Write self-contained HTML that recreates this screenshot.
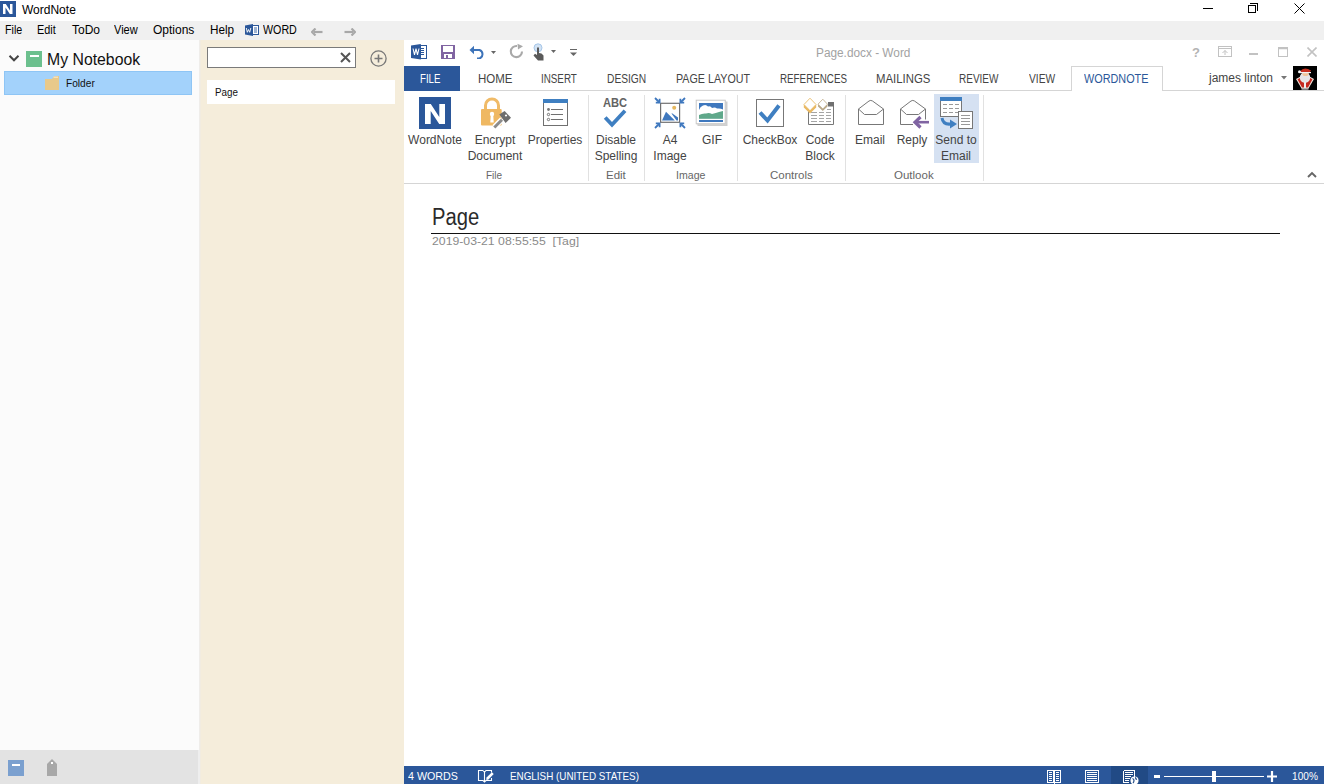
<!DOCTYPE html>
<html><head><meta charset="utf-8">
<style>
*{margin:0;padding:0;box-sizing:border-box}
html,body{width:1324px;height:784px;overflow:hidden;background:#fff;font-family:"Liberation Sans",sans-serif;}
.a{position:absolute;white-space:nowrap}
#title{left:0;top:0;width:1324px;height:21px;background:#fff}
#menu{left:0;top:21px;width:1324px;height:19px;background:#f0f0f0}
.m{font-size:12px;color:#000;top:23px}
#left{left:0;top:40px;width:200px;height:744px;background:#fbfbfb;border-right:1px solid #efedea}
#leftbar{left:0;top:750px;width:200px;height:34px;background:#e3e3e3;border-right:2px solid #eeeeee}
#mid{left:200px;top:40px;width:204px;height:744px;background:#f5eddb;border-left:1px solid #f2ece0}
#word{left:404px;top:40px;width:920px;height:744px;background:#fff}
.tab{font-size:12px;color:#444;top:72px}
.lbl{font-size:12px;color:#444;text-align:center}
.glbl{font-size:11.5px;color:#666;top:169px}
.sep{width:1px;top:95px;height:86px;background:#e1e1e1}
#status{left:404px;top:766px;width:920px;height:18px;background:#2b579a}
.st{font-size:11px;color:#fff;top:770px}
</style></head><body>
<!-- title bar -->
<div class="a" id="title"></div>
<svg class="a" style="left:0;top:1px" width="16" height="16"><rect width="16" height="16" fill="#2b579a"/><path d="M3 3H5.8L10 9.5V3H12.5V13H9.8L5.5 6.5V13H3Z" fill="#fff"/></svg>
<div class="a" style="left:22px;top:3px;font-size:12px;color:#000">WordNote</div>
<!-- window controls -->
<div class="a" style="left:1203px;top:8px;width:10px;height:1px;background:#000"></div>
<div class="a" style="left:1248px;top:5px;width:8px;height:8px;border:1px solid #000"></div>
<div class="a" style="left:1250px;top:3px;width:8px;height:8px;border-top:1px solid #000;border-right:1px solid #000"></div>
<svg class="a" style="left:1294px;top:3px" width="11" height="11"><path d="M0.5 0.5L10.5 10.5M10.5 0.5L0.5 10.5" stroke="#000" stroke-width="1"/></svg>

<!-- menu -->
<div class="a" id="menu"></div>
<div class="a m" id="t_File" style="left:5.21px;transform:scaleX(0.8909);transform-origin:0 0">File</div>
<div class="a m" id="t_Edit" style="left:37.20px;transform:scaleX(0.9048);transform-origin:0 0">Edit</div>
<div class="a m" style="left:72px">ToDo</div>
<div class="a m" id="t_View" style="left:114.00px;transform:scaleX(0.9190);transform-origin:0 0">View</div>
<div class="a m" style="left:153px">Options</div>
<div class="a m" id="t_Help" style="left:210.11px;transform:scaleX(0.9769);transform-origin:0 0">Help</div>
<svg class="a" style="left:245px;top:24px" width="14" height="12"><path d="M0 1.5L8 0V12L0 10.5Z" fill="#2b579a"/><rect x="7.5" y="1.5" width="6" height="9" fill="#fff" stroke="#2b579a" stroke-width="1"/><path d="M9 4H12M9 6H12M9 8H12" stroke="#2b579a" stroke-width="0.9"/><path d="M1.3 4L2.3 8.3L3.5 5.5L4.7 8.3L5.8 4" stroke="#fff" stroke-width="0.9" fill="none"/></svg>
<div class="a m" id="t_WORD" style="left:263.08px;transform:scaleX(0.8903);transform-origin:0 0">WORD</div>
<svg class="a" style="left:311px;top:28px" width="12" height="8"><path d="M11.5 4H3" stroke="#a8a8a8" stroke-width="2.2"/><path d="M4.5 0.5L1 4L4.5 7.5" stroke="#a8a8a8" stroke-width="2.2" fill="none"/></svg>
<svg class="a" style="left:344px;top:28px" width="12" height="8"><path d="M0.5 4H9" stroke="#a8a8a8" stroke-width="2.2"/><path d="M7.5 0.5L11 4L7.5 7.5" stroke="#a8a8a8" stroke-width="2.2" fill="none"/></svg>

<!-- left panel -->
<div class="a" id="left"></div>
<svg class="a" style="left:8px;top:54px" width="12" height="9"><path d="M1.5 1.8L6 6.3L10.5 1.8" stroke="#444" stroke-width="2" fill="none"/></svg>
<div class="a" style="left:26px;top:51px;width:16px;height:16px;background:#6cc08e"></div>
<div class="a" style="left:30px;top:55px;width:9px;height:2px;background:#fff"></div>
<div class="a" id="t_MyNotebook" style="left:47.07px;top:50px;font-size:17px;color:#111;transform:scaleX(0.9300);transform-origin:0 0">My Notebook</div>
<div class="a" style="left:4px;top:71px;width:188px;height:24px;background:#a3d2fb;border:1px solid #8ec5f5"></div>
<svg class="a" style="left:45px;top:76px" width="14" height="14"><path d="M0 3H7L8 1.5Q9 0 11 0H14V14H0Z" fill="#e8c98a"/><path d="M8.5 1.2H13" stroke="#f7ecd4" stroke-width="1"/></svg>
<div class="a" id="t_Folder" style="left:66.11px;top:77px;font-size:11px;color:#111;transform:scaleX(0.9231);transform-origin:0 0">Folder</div>
<div class="a" id="leftbar"></div>
<div class="a" style="left:8px;top:760px;width:16px;height:16px;background:#7ba0cf"></div>
<div class="a" style="left:12px;top:764px;width:8px;height:2px;background:#fff"></div>
<svg class="a" style="left:46px;top:758px" width="12" height="18"><path d="M1 18V6L6 1L11 6V18Z" fill="#a8a8a8"/><rect x="5" y="4" width="2" height="2" fill="#fff"/></svg>

<!-- mid panel -->
<div class="a" id="mid"></div>
<div class="a" style="left:207px;top:47px;width:149px;height:21px;background:#fff;border:1px solid #7a7a7a"></div>
<svg class="a" style="left:340px;top:52px" width="11" height="11"><path d="M1 1L10 10M10 1L1 10" stroke="#555" stroke-width="2"/></svg>
<svg class="a" style="left:370px;top:50px" width="18" height="17"><circle cx="8.5" cy="8.5" r="7.6" stroke="#777" stroke-width="1.3" fill="none"/><path d="M8.5 4.5V12.5M4.5 8.5H12.5" stroke="#777" stroke-width="1.6"/></svg>
<div class="a" style="left:207px;top:80px;width:188px;height:24px;background:#fff"></div>
<div class="a" id="t_PageMid" style="left:214.79px;top:86px;font-size:11px;color:#111;transform:scaleX(0.8928);transform-origin:0 0">Page</div>

<!-- word -->
<div class="a" id="word"></div>
<!-- QAT -->
<svg class="a" style="left:410px;top:43px" width="18" height="17"><rect x="10.5" y="2.5" width="6" height="13" fill="#fff" stroke="#2b579a" stroke-width="1"/><path d="M10 5.5H14M10 7.5H14M10 9.5H14M10 11.5H14" stroke="#2b579a" stroke-width="1"/><path d="M1 2.5L10.8 1V16.5L1 15Z" fill="#2b579a"/><path d="M2.5 5.5L4 12H5L6 8L7 12H8L9.5 5.5H8.5L7.5 9.5L6.5 5.5H5.5L4.5 9.5L3.5 5.5Z" fill="#fff"/></svg>
<svg class="a" style="left:441px;top:45px" width="14" height="14" shape-rendering="crispEdges"><rect x="0" y="0" width="14" height="14" fill="#8064a2"/><rect x="2" y="1" width="10" height="6" fill="#fff"/><rect x="3" y="9" width="8" height="4" fill="#fff"/><rect x="5" y="10" width="2" height="3" fill="#8064a2"/></svg>
<svg class="a" style="left:469px;top:45px" width="30" height="14"><path d="M3 5H10.5A4.5 4.5 0 0 1 10.5 13.5H8" stroke="#3d73b9" stroke-width="2" fill="none"/><path d="M0.5 5L5 0.8V9.2Z" fill="#3d73b9"/><path d="M22 6H27L24.5 9Z" fill="#666"/></svg>
<svg class="a" style="left:508px;top:43px" width="17" height="17"><path d="M14 8.5A5.6 5.6 0 1 1 9 3" stroke="#a9a9a9" stroke-width="2.1" fill="none"/><path d="M9.5 0.8L15 3.2L10 6.5Z" fill="#a9a9a9"/></svg>
<svg class="a" style="left:531px;top:43px" width="28" height="18"><circle cx="7" cy="4.8" r="4" fill="#d3e3f4" stroke="#a6c6e8" stroke-width="1"/><path d="M6 4.5V12L4 10.8L2.5 12.5L7 17.5H12.5V12.5L10.5 10.5L8 10V4.5Z" fill="#5a5a5a"/><path d="M20 7H25L22.5 10Z" fill="#666"/></svg>
<svg class="a" style="left:569px;top:48px" width="9" height="9"><path d="M1 1.5H8" stroke="#666" stroke-width="1"/><path d="M1 4.5H8L4.5 8Z" fill="#666"/></svg>
<div class="a" style="left:816px;top:46px;font-size:12px;color:#a2a2a2;transform:scaleX(0.985);transform-origin:0 0">Page.docx - Word</div>
<div class="a" style="left:1192px;top:45px;font-size:13px;font-weight:bold;color:#b3b3b3">?</div>
<svg class="a" style="left:1218px;top:46px" width="14" height="11"><rect x="0.5" y="0.5" width="13" height="10" fill="none" stroke="#c2c2c2"/><path d="M0.5 2.5H13.5" stroke="#c2c2c2"/><path d="M7 9V4.5M4.5 7L7 4.5L9.5 7" stroke="#c2c2c2" fill="none"/></svg>
<div class="a" style="left:1249px;top:53px;width:9px;height:2px;background:#c2c2c2"></div>
<svg class="a" style="left:1278px;top:47px" width="10" height="10"><rect x="0.5" y="0.5" width="9" height="9" fill="none" stroke="#c2c2c2"/><path d="M0.5 1.5H9.5" stroke="#c2c2c2" stroke-width="1.5"/></svg>
<svg class="a" style="left:1307px;top:47px" width="10" height="10"><path d="M0.5 0.5L9.5 9.5M9.5 0.5L0.5 9.5" stroke="#c2c2c2" stroke-width="1.6"/></svg>
<!-- tabs -->
<div class="a" style="left:404px;top:90px;width:920px;height:1px;background:#d5d5d5"></div>
<div class="a" style="left:404px;top:66px;width:56px;height:25px;background:#2b579a"></div>
<div class="a tab" id="t_FILE" style="left:420.19px;color:#fff;transform:scaleX(0.8086);transform-origin:0 0">FILE</div>
<div class="a tab" id="t_HOME" style="left:477.51px;transform:scaleX(0.9585);transform-origin:0 0">HOME</div>
<div class="a tab" id="t_INSERT" style="left:541.00px;transform:scaleX(0.8182);transform-origin:0 0">INSERT</div>
<div class="a tab" id="t_DESIGN" style="left:606.91px;transform:scaleX(0.8523);transform-origin:0 0">DESIGN</div>
<div class="a tab" id="t_PAGELAYOUT" style="left:676.00px;transform:scaleX(0.8928);transform-origin:0 0">PAGE LAYOUT</div>
<div class="a tab" id="t_REFERENCES" style="left:780.00px;transform:scaleX(0.8171);transform-origin:0 0">REFERENCES</div>
<div class="a tab" id="t_MAILINGS" style="left:876.00px;transform:scaleX(0.9474);transform-origin:0 0">MAILINGS</div>
<div class="a tab" id="t_REVIEW" style="left:959.00px;transform:scaleX(0.8333);transform-origin:0 0">REVIEW</div>
<div class="a tab" id="t_VIEW" style="left:1028.60px;transform:scaleX(0.8517);transform-origin:0 0">VIEW</div>
<div class="a" style="left:1071px;top:66px;width:92px;height:25px;background:#fff;border:1px solid #d5d5d5;border-bottom:none"></div>
<div class="a tab" id="t_WORDNOTE" style="left:1084.00px;color:#2b579a;transform:scaleX(0.9029);transform-origin:0 0">WORDNOTE</div>
<div class="a" style="left:1209px;top:71px;font-size:12px;color:#444">james linton</div>
<svg class="a" style="left:1281px;top:76px" width="6" height="4"><path d="M0 0H6L3 3.5Z" fill="#777"/></svg>
<div class="a" style="left:1293px;top:66px;width:24px;height:24px;background:#000"></div>
<svg class="a" style="left:1293px;top:66px" width="24" height="24"><path d="M3 13L8.5 10H15.5L21 13L15.5 22.5H8.5Z" fill="#f2e8e0"/><path d="M4.5 13.3L9 11H15L19.5 13.3L15 21.5H9Z" fill="#c42a1f"/><path d="M11 15H13V22H11Z" fill="#eee"/><ellipse cx="12" cy="11.5" rx="5.2" ry="5.3" fill="#e6e6e6"/><ellipse cx="12.5" cy="7.5" rx="3.2" ry="2.6" fill="#f0c59a"/><path d="M7 5.5Q11 0 18 4.5L17 6H8Z" fill="#c8301f"/><path d="M7 6H18V7.2H7Z" fill="#f3f3f3"/><circle cx="6.5" cy="5.8" r="1.5" fill="#f3f3f3"/><path d="M8.5 22.5H15.5V23.5H8.5Z" fill="#eee"/></svg>
<!-- ribbon body -->
<div class="a" style="left:404px;top:183px;width:920px;height:1px;background:#d5d5d5"></div>
<div class="a sep" style="left:588px"></div>
<div class="a sep" style="left:644px"></div>
<div class="a sep" style="left:737px"></div>
<div class="a sep" style="left:845px"></div>
<div class="a sep" style="left:983px"></div>
<svg class="a" style="left:1307px;top:171px" width="10" height="8"><path d="M1 6L5 2L9 6" stroke="#666" stroke-width="1.9" fill="none"/></svg>
<!-- File group -->
<div class="a" style="left:419px;top:97px;width:32px;height:32px;background:#2b579a"></div>
<svg class="a" style="left:419px;top:97px" width="32" height="32"><path d="M6 7H11.8L20.3 20V7H26V27H20.2L11.7 14V27H6Z" fill="#fff"/></svg>
<div class="a lbl" style="left:405px;top:133px;width:60px">WordNote</div>
<svg class="a" style="left:476px;top:94px" width="40" height="38"><path d="M9.5 15.5V11.5A6.5 6.5 0 0 1 22.5 11.5V15.5" stroke="#f0bb68" stroke-width="3" fill="none"/><rect x="5" y="15" width="20.7" height="16.5" rx="1" fill="#efb862"/><circle cx="16" cy="20" r="2.2" fill="#fff"/><path d="M14.8 20L14.3 28.5H17.7L17.2 20Z" fill="#fff"/><path d="M26.5 23L31 18.5L35.5 23L31 27.5Z" fill="#fff" stroke="#fff" stroke-width="3"/><path d="M18.5 33L26 25.5" stroke="#fff" stroke-width="5.5"/><path d="M18.3 33.5L26 25.8" stroke="#8c8c8c" stroke-width="3"/><path d="M23.3 20.4L28.6 17L35 23.8L29.6 29Z" fill="#6e6e6e"/><circle cx="30" cy="21.5" r="1.1" fill="#fff"/></svg>
<div class="a lbl" style="left:465px;top:133px;width:60px">Encrypt</div>
<div class="a lbl" style="left:465px;top:149px;width:60px">Document</div>
<svg class="a" style="left:543px;top:99px" width="26" height="27"><rect x="0.5" y="0.5" width="24" height="26" fill="#fff" stroke="#707070"/><rect x="0" y="0" width="25" height="4" fill="#3f7fc1"/><circle cx="5.5" cy="10.5" r="1.4" fill="#777"/><circle cx="5.5" cy="15.5" r="1.2" fill="none" stroke="#666" stroke-width="0.9"/><circle cx="5.5" cy="20.5" r="1.2" fill="none" stroke="#666" stroke-width="0.9"/><path d="M8 10.5H20M8 15.5H20M8 20.5H20" stroke="#707070" stroke-width="1"/></svg>
<div class="a lbl" style="left:525px;top:133px;width:60px">Properties</div>
<div class="a glbl" style="left:485.5px;transform:scaleX(0.87);transform-origin:0 0">File</div>
<!-- Edit -->
<div class="a" style="left:603px;top:96px;font-size:12px;font-weight:bold;color:#636363;transform:scaleX(0.93);transform-origin:0 0">ABC</div>
<svg class="a" style="left:602px;top:108px" width="26" height="21"><path d="M3.2 9.5L10 16.8L23 2.8" stroke="#3f7fc1" stroke-width="3.8" fill="none" stroke-linejoin="miter"/></svg>
<div class="a lbl" style="left:586px;top:133px;width:60px">Disable</div>
<div class="a lbl" style="left:586px;top:149px;width:60px">Spelling</div>
<div class="a glbl" style="left:606px">Edit</div>
<!-- Image -->
<svg class="a" style="left:650px;top:94px" width="40" height="38"><rect x="10.6" y="9.3" width="19" height="19" fill="#fff" stroke="#707070" stroke-width="1.2"/><path d="M12 26.6L16 17.8L24.8 26.6Z" fill="#3f78be"/><path d="M21.5 19.6L22 19.3L28 23.6V26.6L26.5 26.6Z" fill="#3f78be"/><circle cx="24.2" cy="13.8" r="2" fill="#e5b75e"/><g stroke="#3f78be" stroke-width="1.8" fill="none"><path d="M5 4L9.5 8.5M35 4L30.5 8.5M5 34L9.5 29.5M35 34L30.5 29.5"/><path d="M5.8 8.6H9.6V4.8M34.2 8.6H30.4V4.8M5.8 29.4H9.6V33.2M34.2 29.4H30.4V33.2"/></g></svg>
<div class="a lbl" style="left:640px;top:133px;width:60px">A4</div>
<div class="a lbl" style="left:640px;top:149px;width:60px">Image</div>
<svg class="a" style="left:695px;top:99px" width="34" height="28"><rect x="2.5" y="2.5" width="30" height="24.5" fill="#cfcfcf"/><rect x="1.5" y="1.5" width="29.5" height="24" fill="#d9d9d9"/><rect x="1.2" y="1.2" width="29" height="23.5" fill="#fff" stroke="#c9c9c9" stroke-width="1"/><rect x="4" y="4" width="24" height="15.8" fill="#3f78be"/><path d="M4 11Q5 7.5 8 6.5Q11 5 13 7.5Q15.5 6.5 17 9Q20 8 22 9.5Q25.5 9 28 10.5V19.8H4Z" fill="#fff"/><path d="M4 16Q7.5 14 11 14.5Q14 13.5 17 15Q21 14 24 13Q26 12.5 28 12V19.8H4Z" fill="#5fa88a"/><rect x="4" y="21" width="24" height="2" fill="#3f78be"/></svg>
<div class="a lbl" style="left:682px;top:133px;width:60px">GIF</div>
<div class="a glbl" style="left:675.5px;transform:scaleX(0.92);transform-origin:0 0">Image</div>
<!-- Controls -->
<svg class="a" style="left:756px;top:99px" width="29" height="28"><rect x="0.5" y="0.5" width="27" height="27" fill="#fff" stroke="#777"/><path d="M4 13.5L11.5 21.5L23 6.5" stroke="#3f7fc1" stroke-width="4" fill="none"/></svg>
<div class="a lbl" style="left:740px;top:133px;width:60px">CheckBox</div>
<svg class="a" style="left:802px;top:97px" width="34" height="30"><path d="M6.5 10V27.5H31.5V5.5H27" fill="#fff" stroke="#777"/><path d="M25 12.5H29M9 15.5H15M17 15.5H22M24 15.5H29M9 18.5H15M17 18.5H22M24 18.5H29M9 21.5H15M17 21.5H22M24 21.5H29M9 24.5H15M17 24.5H22M24 24.5H29" stroke="#a5a5a5" stroke-width="1"/><rect x="26" y="5" width="6" height="4.5" fill="#707070"/><path d="M8 1.2L14 7.5L8 13.8L2 7.5Z" fill="#fff" stroke="#ecc47a" stroke-width="1"/><path d="M1.8 7.5L8 13.5L14.2 7.5V10.5L8 16.5L1.8 10.5Z" fill="#e9b963"/><path d="M20.8 2.2L25.5 7.2L20.8 12L16 7.2Z" fill="#fff" stroke="#cbbb9d" stroke-width="1"/><path d="M16 7.2L20.8 12L25.5 7.2V9.5L20.8 14L16 9.5Z" fill="#b9a888"/></svg>
<div class="a lbl" style="left:790px;top:133px;width:60px">Code</div>
<div class="a lbl" style="left:790px;top:149px;width:60px">Block</div>
<div class="a glbl" style="left:770px">Controls</div>
<!-- Outlook -->
<svg class="a" style="left:857px;top:99px" width="28" height="27"><path d="M1.5 25.5V10L12 2Q13.8 0.8 15.5 2L26.5 10V25.5Z" fill="#fff" stroke="#777" stroke-width="1" stroke-linejoin="round"/><path d="M1.5 10L7.5 15.5H19.5L26.5 10" fill="none" stroke="#777" stroke-width="1"/></svg>
<div class="a lbl" style="left:840px;top:133px;width:60px">Email</div>
<svg class="a" style="left:899px;top:98px" width="32" height="33"><path d="M14 26.5H1.5V11L12 3Q13.8 1.8 15.5 3L26.5 11V21.5" fill="#fff" stroke="#777" stroke-width="1" stroke-linejoin="round"/><path d="M1.5 11L7.5 16.5H19.5L26.5 11" fill="none" stroke="#777" stroke-width="1"/><path d="M17 24.2H30" stroke="#8064a2" stroke-width="2.6"/><path d="M21.5 19L16 24.2L21.5 29.5" stroke="#8064a2" stroke-width="3.2" fill="none"/></svg>
<div class="a lbl" style="left:882px;top:133px;width:60px">Reply</div>
<div class="a" style="left:934px;top:94px;width:45px;height:69px;background:#d5e1f2"></div>
<svg class="a" style="left:939px;top:96px" width="36" height="34"><rect x="1.5" y="1.5" width="21" height="19" fill="#fff" stroke="#777"/><rect x="1" y="1" width="22" height="4" fill="#3f7fc1"/><path d="M4 8.5H8M10 8.5H14M16 8.5H20M4 12.5H8M10 12.5H14M16 12.5H20M4 16.5H8M10 16.5H14M16 16.5H20" stroke="#9a9a9a" stroke-width="1"/><rect x="19.5" y="15.5" width="14" height="17" fill="#fff" stroke="#777"/><path d="M22 19.5H31M22 22.5H31M22 25.5H31M22 28.5H31" stroke="#999" stroke-width="1"/><path d="M3 22Q4 29 12 28" stroke="#3f7fc1" stroke-width="3" fill="none"/><path d="M11 23.5L18 28L11 32.5Z" fill="#3f7fc1"/></svg>
<div class="a lbl" style="left:926px;top:133px;width:60px">Send to</div>
<div class="a lbl" style="left:926px;top:149px;width:60px">Email</div>
<div class="a glbl" style="left:894px">Outlook</div>
<!-- document -->
<div class="a" id="t_PageDoc" style="left:431.62px;top:204px;font-size:23px;color:#2a2a2a;transform:scaleX(0.8789);transform-origin:0 0">Page</div>
<div class="a" style="left:431px;top:233px;width:849px;height:1px;background:#111"></div>
<div class="a" id="t_date" style="left:432.00px;top:235px;font-size:11px;color:#8a8a8a;transform:scaleX(1.1136);transform-origin:0 0">2019-03-21 08:55:55&nbsp;&nbsp;[Tag]</div>

<!-- status -->
<div class="a" id="status"></div>
<div class="a st" id="t_4WORDS" style="left:408.40px;transform:scaleX(0.9732);transform-origin:0 0">4 WORDS</div>
<svg class="a" style="left:477px;top:769px" width="18" height="15"><path d="M6 1.5H1.5V11.5H6L7.5 13L9 11.5H14.5V9M6 1.5L7.5 3.2L9 1.5H14.5V3.5M7.5 3.2V13.5" fill="none" stroke="#fff" stroke-width="1.1"/><path d="M10 10L15.8 4.2" stroke="#fff" stroke-width="2.6"/><path d="M9.2 11.2L9.6 9.2L11 10.6Z" fill="#fff"/></svg>
<div class="a st" id="t_ENGLISH" style="left:510.00px;transform:scaleX(0.8966);transform-origin:0 0">ENGLISH (UNITED STATES)</div>
<svg class="a" style="left:1047px;top:770px" width="14" height="14" shape-rendering="crispEdges"><path d="M0.5 0.5H6.5V12.5H0.5Z M7.5 0.5H13.5V12.5H7.5Z" fill="none" stroke="#fff"/><path d="M2 2.5H5M2 4.5H5M2 6.5H5M2 8.5H5M2 10.5H5M9 2.5H12M9 4.5H12M9 6.5H12M9 8.5H12M9 10.5H12M7 1V14" stroke="#fff"/></svg>
<svg class="a" style="left:1085px;top:770px" width="14" height="14" shape-rendering="crispEdges"><rect x="0.5" y="0.5" width="13" height="12" fill="none" stroke="#fff"/><path d="M2 2.5H12M2 4.5H12M2 6.5H12M2 8.5H12M2 10.5H12" stroke="#fff"/></svg>
<div class="a" style="left:1111px;top:766px;width:37px;height:18px;background:#214a85"></div>
<svg class="a" style="left:1123px;top:770px" width="16" height="15"><path d="M0.5 0.5H11.5V7M6 12.5H0.5V0.5" fill="none" stroke="#fff" shape-rendering="crispEdges"/><path d="M2 2.5H10M2 4.5H10M2 6.5H8M2 8.5H7M2 10.5H6" stroke="#fff" shape-rendering="crispEdges"/><circle cx="11.5" cy="10.5" r="4" fill="#fff"/><path d="M9.5 8.5Q11 9 11 10.5T10 13M12.5 7.2Q12.3 9 14 9.5" stroke="#214a85" stroke-width="1.2" fill="none"/></svg>
<div class="a" style="left:1154px;top:775px;width:6px;height:3px;background:#fff"></div>
<div class="a" style="left:1164px;top:776px;width:100px;height:1px;background:#fff"></div>
<div class="a" style="left:1212px;top:771px;width:4px;height:11px;background:#fff"></div>
<svg class="a" style="left:1267px;top:771px" width="10" height="11"><path d="M5 0V11M0 5.5H10" stroke="#fff" stroke-width="2.2"/></svg>
<div class="a st" style="left:1292px;transform:scaleX(0.92);transform-origin:0 0">100%</div>
</body></html>
